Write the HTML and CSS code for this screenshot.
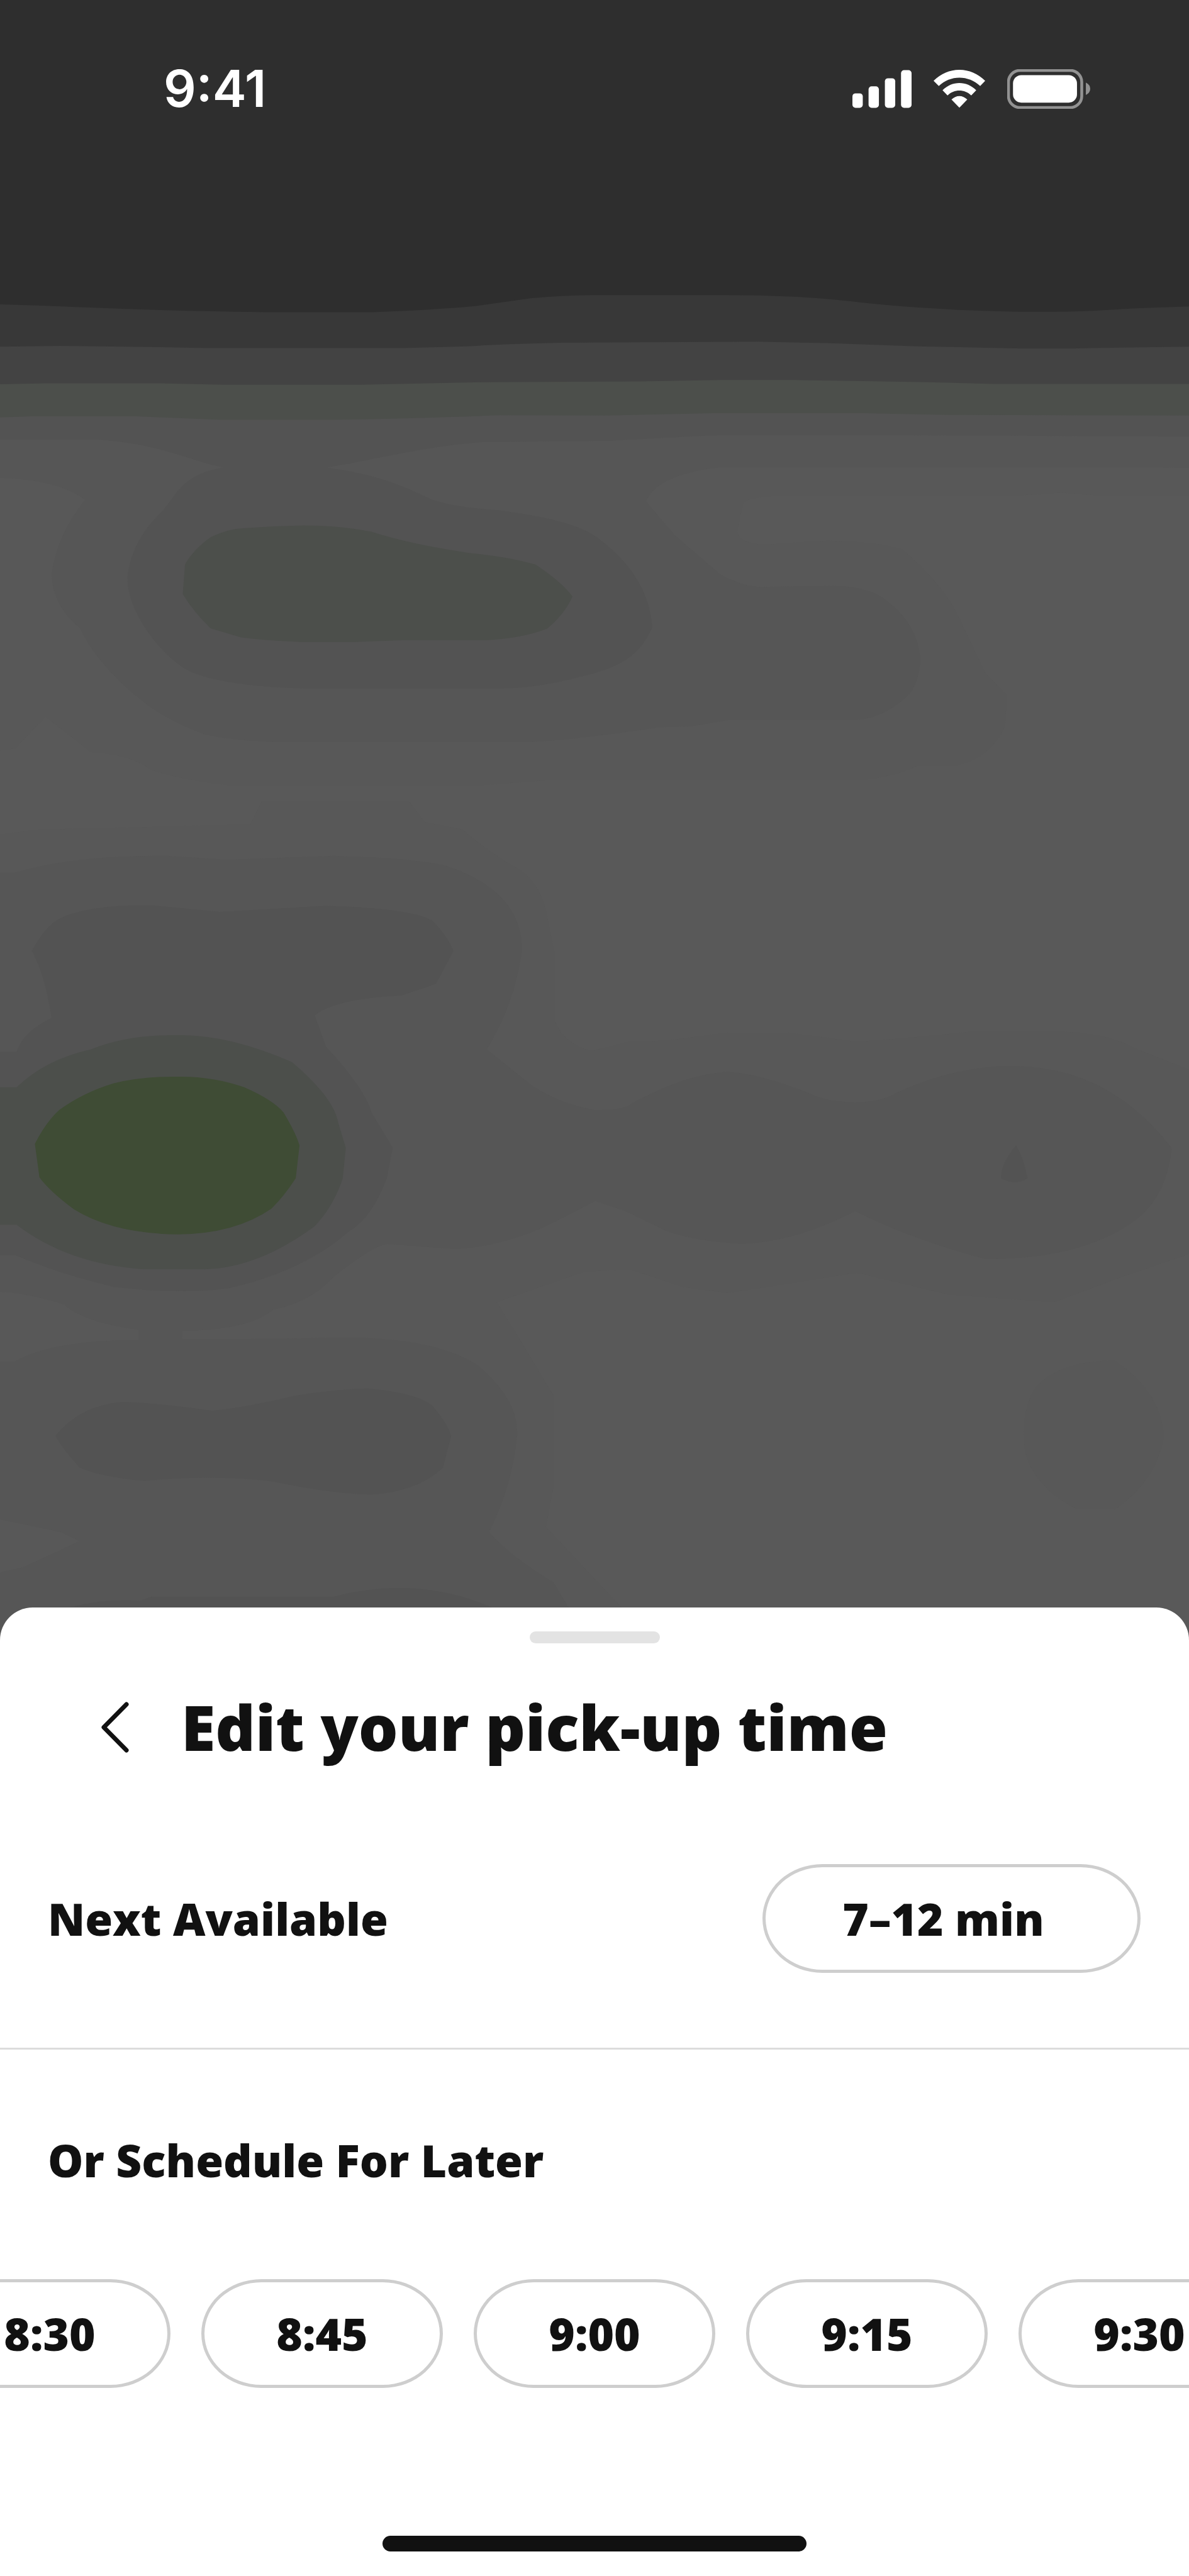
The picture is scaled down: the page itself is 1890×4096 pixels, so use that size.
FILE: index.html
```html
<!DOCTYPE html>
<html lang="en">
<head>
<meta charset="utf-8">
<meta name="viewport" content="width=device-width, initial-scale=1">
<title>Edit your pick-up time</title>
<link rel="stylesheet" href="styles.css">
</head>
<body>
<div class="screen">
  <div class="hero">
    <svg class="backdrop" viewBox="0 0 1920 2660" preserveAspectRatio="xMidYMin slice" aria-hidden="true">
      <rect class="tone-1" width="1920" height="2660"/>
      <g transform="translate(0 440) scale(1.2245 .574)">
        <path class="tone-2" d="M0 300H1568V628H1450L1400 620 1340 628H1040Q985 630 980 650L972 730Q975 765 1010 766L1090 755Q1160 758 1190 780 1240 870 1262 960L1300 1130 1328 1190 1325 1280Q1305 1370 1260 1388H1210Q1180 1420 1130 1430H720L620 1445H310Q240 1430 200 1400 170 1355 120 1350L60 1250 20 1340 0 1345Z"/>
        <path class="tone-3" d="M0 300H1568V550L1500 548H950Q865 570 852 645L890 740 950 850Q975 880 1000 885L1100 882Q1140 885 1160 910 1210 980 1214 1090 1212 1150 1200 1185 1170 1250 1130 1260H960L910 1278 870 1280Q760 1315 700 1322H360Q300 1315 270 1300 220 1260 190 1210 130 1110 105 1000 70 940 68 850 75 740 112 640 80 585 0 578Z"/>
        <path class="tone-4" d="M0 300H1568V462L1180 458H950C860 465 820 475 760 475L640 477C560 488 500 525 430 549 500 570 530 600 570 640 600 660 630 665 660 670 730 690 770 715 790 750 840 830 858 920 860 1000 845 1065 830 1100 780 1130 730 1160 690 1171 660 1171H400C350 1168 270 1155 240 1110 200 1050 168 940 168 860 172 780 190 720 215 670 235 620 240 570 295 549 250 530 210 480 125 470H0Z"/>
        <path class="tone-5" d="M0 250H1568V403L1250 401 1140 396H940L800 403 660 402Q560 410 440 415H290L180 405H40L0 408Z"/>
        <path class="tone-5" d="M241 905L244 822Q255 780 278 745 300 722 320 720 360 713 400 712 450 712 490 730 540 765 620 790 670 800 706 822 740 870 755 912 745 960 722 1002 690 1030 640 1035H530L470 1040H395Q350 1036 318 1027L278 1002Q255 955 241 905Z"/>
        <path class="tone-6" d="M0 150H1568V314H1310L1225 309 1140 306 1050 303H950L840 307 640 309 475 316H295L205 312H60L0 315Z"/>
        <path class="tone-7" d="M0 0H1568V209L1440 213Q1380 216 1320 213L1210 208 1090 199 1000 195 740 198Q660 202 615 208L530 213H275L200 210 80 207 0 209Z"/>
        <path class="tone-8" d="M0-800H1568V96Q1500 100 1440 108 1360 115 1260 105 1190 97 1150 88 1080 70 1040 68 1000 64 960 64H780Q740 65 700 73 660 85 630 94 570 106 490 112H350Q200 107 120 99 40 92 0 90Z"/>
      </g>
      <g transform="translate(0 1340) scale(1.2245 .8163)">
        <path class="tone-2" d="M0 10L50 0 330-10 345-55H540L560-15 610 0Q640 40 680 75 710 100 720 160L732 250V380Q745 425 780 438L830 420 880 417 960 402H1040L1130 420 1200 412 1280 400H1400Q1460 402 1500 435L1568 475V840L1480 885 1390 935 1250 920 1130 877 960 917 900 905 830 870 770 875 655 935 690 1020 730 1120V1300L720 1380 820 1540V1620H0Z"/>
        <path class="tone-2" d="M1350 1200Q1350 1120 1375 1090 1410 1050 1470 1051 1530 1110 1535 1200 1525 1290 1470 1345H1420Q1350 1290 1350 1200Z"/>
        <path class="tone-3" d="M0 85H20Q100 50 220 52L300 60 440 52Q570 58 600 78 690 130 688 240 680 340 642 435L700 505Q740 545 785 555 820 555 830 545 900 485 960 479 1010 485 1080 530 1130 550 1170 530 1250 470 1330 468 1460 465 1545 630 1540 720 1500 770 1430 850 1300 850 1200 810 1128 755 1050 815 980 820 920 815 880 795L825 755 785 735 740 770Q670 825 600 830L510 820Q490 825 440 885 410 935 360 950 330 990 240 992V1008H330L470 1005Q580 1010 630 1060 685 1130 682 1200 675 1300 645 1390 670 1435 730 1490L750 1540V1620H0V1470L30 1460 105 1408 80 1390 0 1365V1052H20Q70 1010 183 1010V990Q110 975 85 940 30 915 0 915Z"/>
        <path class="tone-4" d="M42 240Q60 190 80 175 120 148 200 150L290 163 430 151Q540 155 570 180 590 210 598 240L575 305 530 328Q440 335 415 368L430 430Q480 510 490 560L518 630 510 690Q490 770 460 795 400 875 300 908 235 920 150 905 80 880 20 842H0V440H22Q30 400 68 373Q60 290 42 240Z"/>
        <path class="tone-4" d="M73 1200Q105 1140 160 1133 200 1133 280 1150 320 1145 390 1120 440 1108 485 1106 550 1115 570 1140 590 1175 595 1200L584 1263Q550 1310 490 1316 440 1315 360 1290 280 1275 190 1289 130 1280 105 1262Q85 1230 73 1200ZM90 1540Q140 1520 185 1526L200 1518H440Q550 1475 650 1540V1600H60Z"/>
        <path class="tone-4" d="M1340 625Q1350 650 1355 690 1340 705 1320 690 1320 660 1340 625Z"/>
        <path class="tone-5" d="M0 510H22Q60 455 120 435 170 405 235 407 300 405 385 460 440 530 446 580L456 630 452 690Q440 745 415 785 340 868 270 870H190Q90 860 22 782H0Z"/>
        <path class="green" d="M46 622Q60 580 78 555 110 520 150 502 190 488 235 489 280 488 322 510 360 535 374 560 390 600 395 625L390 690Q375 725 358 750 310 800 235 801 150 800 98 752 65 715 52 688Z"/>
      </g>
    </svg>
    <header class="status">
      <time class="clock">9:41</time>
      <div class="indicators">
        <svg width="94" height="61" viewBox="0 0 286 182" role="img" aria-label="Signal">
          <g fill="#fff"><rect y="112" width="50" height="70" rx="15"/><rect x="78" y="78" width="50" height="104" rx="15"/><rect x="157" y="39" width="50" height="143" rx="15"/><rect x="235" width="51" height="182" rx="15"/></g>
        </svg>
        <svg width="82" height="61" viewBox="0 0 248 184" role="img" aria-label="Wi-Fi">
          <path fill="#fff" d="M0 53C70-18 178-18 248 53L224 78C168 24 80 24 25 78ZM43 98C90 52 158 52 205 98L181 123C149 92 99 92 67 123ZM86 143C108 120 140 120 162 143L124 182Z"/>
        </svg>
        <svg width="132" height="63" viewBox="0 0 402 192" role="img" aria-label="Battery">
          <rect x="6" y="6" width="355" height="180" rx="56" fill="none" stroke="#929292" stroke-width="14"/>
          <rect x="28" y="29" width="310" height="133" rx="40" fill="#fff"/>
          <path fill="#929292" d="M381 65Q402 76 402 95T381 125Z"/>
        </svg>
      </div>
    </header>
  </div>

  <main class="sheet">
    <div class="grabber"></div>
    <div class="heading">
      <button class="back" type="button" aria-label="Back">
        <svg width="46" height="83" viewBox="0 0 46 83"><path d="M41 5 5 41.500 41 78" fill="none" stroke="#111" stroke-width="7" stroke-linecap="round" stroke-linejoin="round"/></svg>
      </button>
      <h1 class="title">Edit your pick-up time</h1>
    </div>
    <section class="next">
      <h2 class="label">Next Available</h2>
      <button class="pill pill-wide" type="button">7–12 min</button>
    </section>
    <hr class="rule">
    <section class="later">
      <h2 class="label">Or Schedule For Later</h2>
      <div class="times">
        <button class="pill" type="button">8:30</button>
        <button class="pill" type="button">8:45</button>
        <button class="pill" type="button">9:00</button>
        <button class="pill" type="button">9:15</button>
        <button class="pill" type="button">9:30</button>
      </div>
    </section>
    <div class="home-bar"></div>
  </main>
</div>
</body>
</html>
```
FILE: styles.css
```css
* {
  box-sizing: border-box;
}

body {
  margin: 0;
  background: #fff;
  color: #111;
  font-family: "Open Sans", sans-serif;
  font-weight: 800;
}

.screen {
  display: flex;
  flex-direction: column;
  min-height: 100vh;
  overflow: hidden;
}

.hero {
  position: relative;
  flex: 1;
  overflow: hidden;
  background: #595959;
}

.backdrop {
  position: absolute;
  inset: 0;
  width: 100%;
  height: 100%;
}

.tone-1 { fill: #595959; }
.tone-2 { fill: #585858; }
.tone-3 { fill: #565656; }
.tone-4 { fill: #535353; }
.tone-5 { fill: #4c4f4b; }
.tone-6 { fill: #434343; }
.tone-7 { fill: #383838; }
.tone-8 { fill: #2e2e2e; }
.green { fill: #3f4c35; }

.status {
  position: relative;
  display: flex;
  align-items: center;
  justify-content: space-between;
  padding: 91px 157px 0 260px;
}

.clock {
  color: #fff;
  font-family: Inter, sans-serif;
  font-size: 81px;
  font-weight: 600;
  line-height: 100px;
}

.indicators {
  display: flex;
  align-items: center;
  gap: 35px;
}

.sheet {
  position: relative;
  margin-top: -60px;
  padding-bottom: 39px;
  border-radius: 52px 52px 0 0;
  background: #fff;
}

.grabber {
  width: 207px;
  height: 19px;
  margin: 38px auto 73px;
  border-radius: 10px;
  background: #e3e3e3;
}

.heading {
  display: flex;
  align-items: center;
  gap: 82px;
  padding: 0 160px;
}

.back {
  display: flex;
  padding: 0;
  border: 0;
  background: none;
}

.title {
  margin: 0;
  font-size: 99px;
  font-weight: 800;
  line-height: 120px;
  white-space: nowrap;
}

.next {
  display: flex;
  align-items: center;
  justify-content: space-between;
  padding: 158px 77px 119px 76px;
}

.label {
  margin: 0;
  font-size: 71px;
  font-weight: 800;
  line-height: 86px;
  white-space: nowrap;
}

.pill {
  flex: none;
  width: 384px;
  height: 173px;
  padding: 0;
  border: 5px solid #cecece;
  border-radius: 96px / 87px;
  background: #fff;
  color: #111;
  font: inherit;
  font-size: 71px;
  line-height: 86px;
  white-space: nowrap;
}

.pill-wide {
  width: 601px;
  padding-right: 26px;
}

.rule {
  height: 3px;
  margin: 0;
  border: 0;
  background: #dcdcdc;
}

.later {
  padding-top: 133px;
}

.later .label {
  padding-left: 76px;
}

.times {
  display: flex;
  justify-content: center;
  gap: 49px;
  margin-top: 146px;
}

.home-bar {
  width: 674px;
  height: 25px;
  margin: 235px auto 0;
  border-radius: 13px;
  background: #111;
}
```
